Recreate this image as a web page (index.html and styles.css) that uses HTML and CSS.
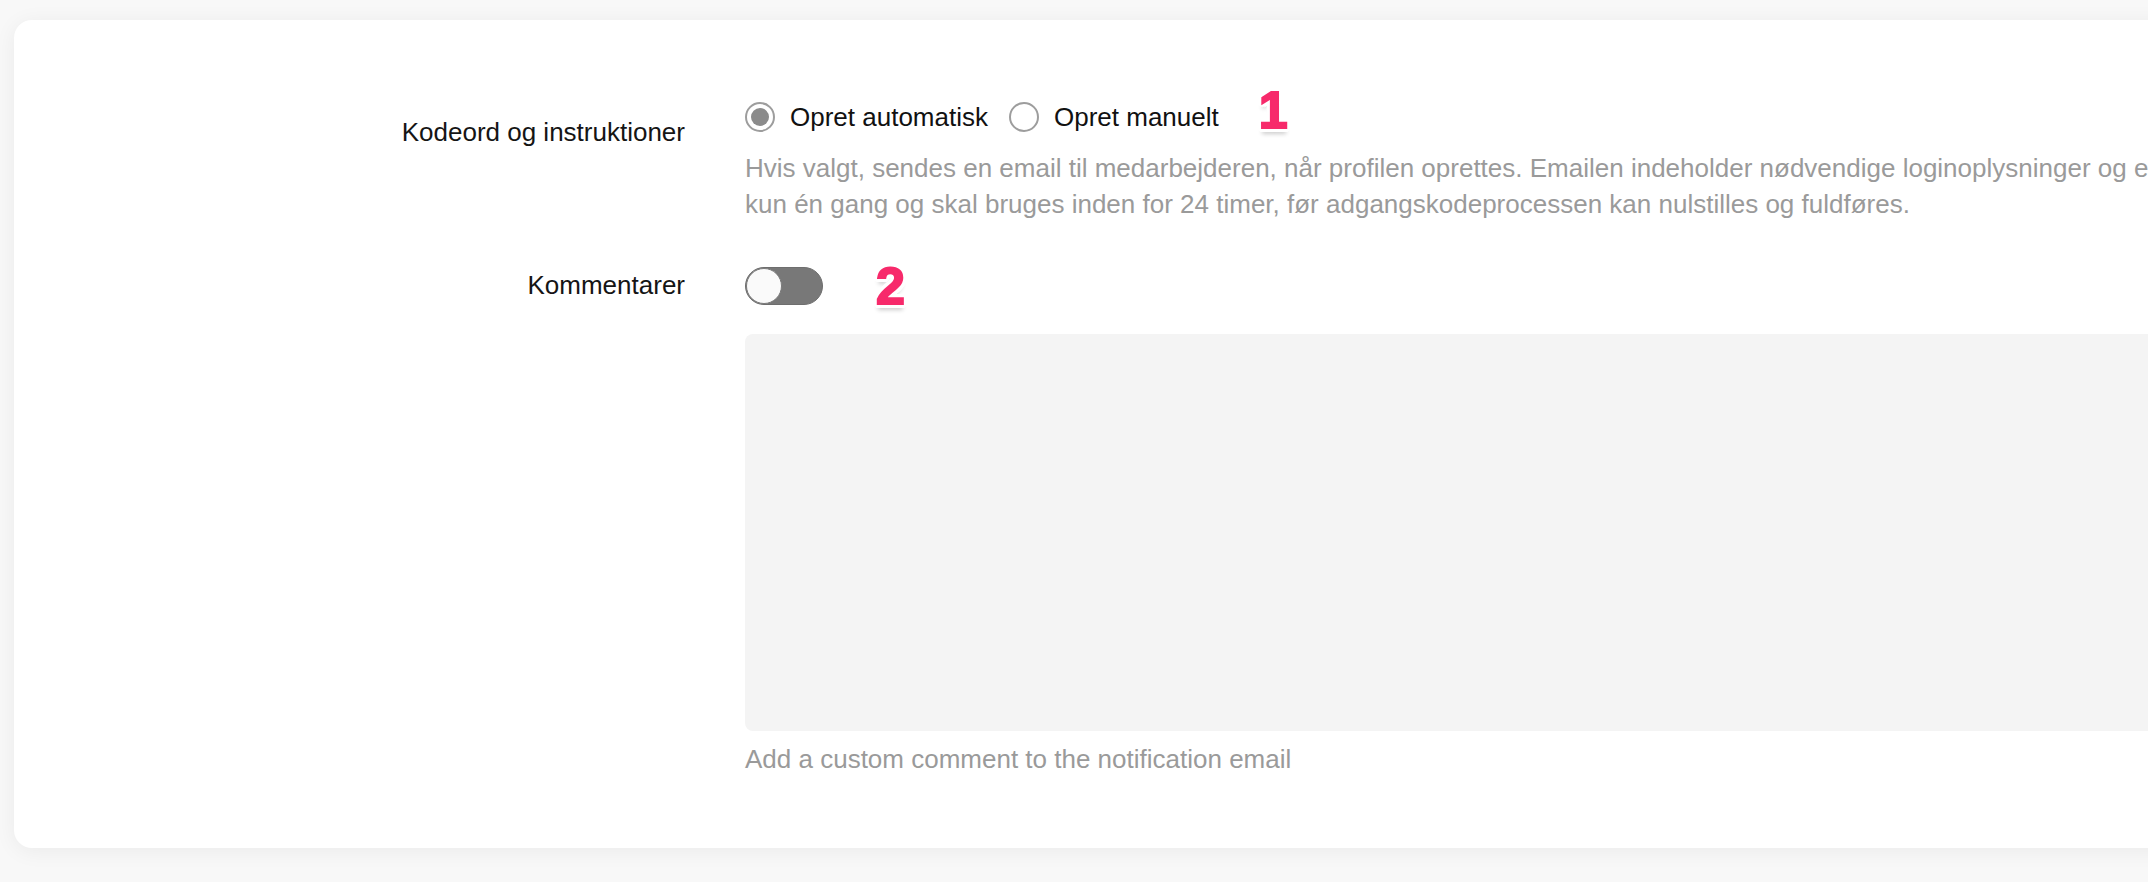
FILE: index.html
```html
<!DOCTYPE html>
<html lang="da">
<head>
<meta charset="utf-8">
<title>Kodeord og instruktioner</title>
<link rel="stylesheet" href="styles.css">
</head>
<body>
<div class="card">
  <div class="form">
    <div class="label label-first">Kodeord og instruktioner</div>
    <div class="control">
      <div class="radio-row">
        <label class="radio"><span class="radio-circle checked"></span><span>Opret automatisk</span></label>
        <label class="radio"><span class="radio-circle"></span><span>Opret manuelt</span></label>
        <span class="badge badge-one">1</span>
      </div>
      <div class="description">
        <span class="line">Hvis valgt, sendes en email til medarbejderen, når profilen oprettes. Emailen indeholder nødvendige loginoplysninger og et link til at oprette en adgangskode. Linket kan bruges</span>
        <span class="line">kun én gang og skal bruges inden for 24 timer, før adgangskodeprocessen kan nulstilles og fuldføres.</span>
      </div>
    </div>

    <div class="label label-second">Kommentarer</div>
    <div class="control control-second">
      <div class="toggle-row">
        <span class="toggle"><span class="knob"></span></span>
        <span class="badge badge-two">2</span>
      </div>
      <div class="textarea"></div>
      <div class="help">Add a custom comment to the notification email</div>
    </div>
  </div>
</div>
</body>
</html>
```
FILE: styles.css
```css
html, body {
  margin: 0;
  padding: 0;
}
body {
  background: #f8f8f8;
  font-family: "Liberation Sans", Arial, sans-serif;
  font-size: 26px;
  color: #111;
  overflow: hidden;
  width: 2148px;
  height: 882px;
}
.card {
  margin: 20px 0 0 14px;
  width: 2300px;
  background: #fff;
  border-radius: 18px;
  box-shadow: 0 3px 22px rgba(0, 0, 0, 0.06);
  padding: 79px 0 71px 0;
  box-sizing: border-box;
}
.form {
  display: grid;
  grid-template-columns: 671px 1fr;
  column-gap: 60px;
  row-gap: 45px;
}
.label {
  text-align: right;
  line-height: 36px;
  color: #151515;
}
.label-first {
  padding-top: 15px;
}
.control {
  display: flex;
  flex-direction: column;
}
.radio-row {
  display: flex;
  align-items: center;
  height: 36px;
}
.radio {
  display: flex;
  align-items: center;
  gap: 15px;
  line-height: 36px;
  margin-right: 21px;
}
.radio-circle {
  width: 30px;
  height: 30px;
  border: 2px solid #9d9d9d;
  border-radius: 50%;
  box-sizing: border-box;
  display: flex;
  align-items: center;
  justify-content: center;
}
.radio-circle.checked::after {
  content: "";
  width: 18px;
  height: 18px;
  border-radius: 50%;
  background: #8b8b8b;
}
.badge {
  font-family: "Liberation Sans", Arial, sans-serif;
  font-weight: 700;
  color: #f72a6b;
  font-size: 52px;
  line-height: 1;
  -webkit-text-stroke: 2px #f72a6b;
  text-shadow:
    4px 0 0 #fff, -4px 0 0 #fff, 0 4px 0 #fff, 0 -4px 0 #fff,
    3px 3px 0 #fff, -3px -3px 0 #fff, 3px -3px 0 #fff, -3px 3px 0 #fff,
    2px 4px 0 #fff, -2px 4px 0 #fff, 4px 2px 0 #fff, -4px 2px 0 #fff,
    2px -4px 0 #fff, -2px -4px 0 #fff, 4px -2px 0 #fff, -4px -2px 0 #fff,
    0 6px 4px rgba(0, 0, 0, 0.2);
}
.badge-one {
  margin-left: 19px;
  transform: translateY(-7px);
}
.description {
  margin-top: 15px;
  color: #9a9a9a;
  line-height: 36px;
}
.description .line {
  display: block;
  white-space: nowrap;
}
.toggle-row {
  display: flex;
  align-items: center;
  height: 38px;
}
.toggle {
  width: 78px;
  height: 38px;
  border-radius: 19px;
  background: #787878;
  box-sizing: border-box;
  border: 1px solid #6e6e6e;
  display: flex;
  align-items: center;
}
.knob {
  width: 36px;
  height: 36px;
  border-radius: 50%;
  background: #fafafa;
  box-sizing: border-box;
  border: 1px solid #7a7a7a;
}
.badge-two {
  margin-left: 53px;
}
.textarea {
  margin-top: 29px;
  height: 397px;
  background: #f4f4f4;
  border-radius: 8px;
}
.help {
  margin-top: 10px;
  line-height: 36px;
  color: #9a9a9a;
}
```
